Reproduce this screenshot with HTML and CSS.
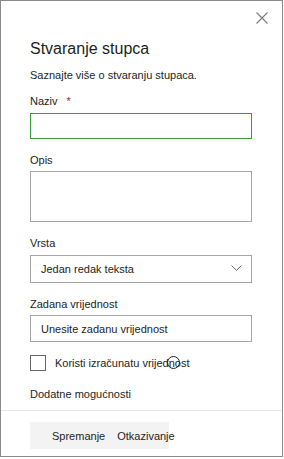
FILE: index.html
```html
<!DOCTYPE html>
<html lang="hr">
<head>
  <meta charset="UTF-8" />
  <meta name="viewport" content="width=device-width, initial-scale=1.0"/>
  <title>Stvaranje stupca</title>
  <link rel="stylesheet" href="styles.css">
</head>
<body>
  <div class="panel">
    <div class="panel-top">
      <button class="close-btn" title="Zatvori">
        <svg width="12" height="12" viewBox="0 0 12 12"><path d="M0.5 0.5L11.5 11.5M11.5 0.5L0.5 11.5" stroke="#7a7a7a" stroke-width="1.1" fill="none"/></svg>
      </button>
    </div>
    <div class="panel-body">
      <h2 class="title">Stvaranje stupca</h2>
      <div class="subtitle">Saznajte više o stvaranju stupaca.</div>

      <div class="group first">
        <label class="lbl">Naziv <span class="req">*</span></label>
        <div class="field field-active"></div>
      </div>

      <div class="group">
        <label class="lbl">Opis</label>
        <div class="field field-area"></div>
      </div>

      <div class="group">
        <label class="lbl">Vrsta</label>
        <div class="field field-select">
          <span>Jedan redak teksta</span>
          <svg width="11" height="6" viewBox="0 0 11 6"><path d="M0.5 0.5L5.5 5.3L10.5 0.5" stroke="#6b6b6b" stroke-width="1" fill="none"/></svg>
        </div>
      </div>

      <div class="group">
        <label class="lbl">Zadana vrijednost</label>
        <div class="field field-text">Unesite zadanu vrijednost</div>
      </div>

      <div class="check-row">
        <span class="check-box"></span>
        <span class="check-label">Koristi izračunatu vrijednost<span class="info-ring"></span></span>
      </div>

      <div class="more">Dodatne mogućnosti</div>
    </div>
    <div class="panel-foot">
      <div class="btn-bar">
        <span>Spremanje</span>
        <span>Otkazivanje</span>
      </div>
    </div>
  </div>
</body>
</html>
```

FILE: styles.css
```css
body {margin: 0; padding: 0; background: #fff; font-family: "Liberation Sans", Arial, sans-serif; color: #252423;}
.panel {box-sizing: border-box; width: 283px; height: 457px; border: 1px solid #8a8a8a; display: flex; flex-direction: column; background: #fff;}
.panel-top {display: flex; justify-content: flex-end; height: 30px; padding: 11px 14px 0 0; box-sizing: border-box;}
.close-btn {background: none; border: none; padding: 0; width: 12px; height: 12px; cursor: pointer; display: block;}
.close-btn svg {display: block;}
.panel-body {padding: 0 0 0 29px;}
.title {margin: 8px 0 0; font-size: 16px; line-height: 20px; font-weight: normal; color: #201f1e;}
.subtitle {margin-top: 8px; font-size: 11px; line-height: 16px; color: #201f1e;}
.group {margin-top: 13px;}
.group.first {margin-top: 10px;}
.lbl {display: block; font-size: 11px; line-height: 16px; margin-bottom: 3.5px; color: #252423;}
.req {color: #a4262c; margin-left: 6px;}
.field {box-sizing: border-box; width: 222px; border: 1px solid #a6a6a6; background: #fff; font-size: 11px; color: #252423;}
.field-active {height: 26px; border-color: #36a036;}
.field-area {height: 51px;}
.field-select {height: 28px; display: flex; align-items: center; justify-content: space-between; padding: 0 9px 0 10px;}
.field-select svg {display: block; margin-top: -1px;}
.field-text {height: 27px; display: flex; align-items: center; padding-left: 10px;}
.check-row {display: flex; align-items: center; margin-top: 13px; height: 16px;}
.check-box {box-sizing: border-box; width: 16px; height: 16px; border: 1px solid #666; margin-right: 9px;}
.check-label {position: relative; font-size: 11px; line-height: 16px;}
.info-ring {position: absolute; left: 112px; top: 1px; width: 11px; height: 11px; border: 1px solid #222; border-radius: 50%;}
.more {margin-top: 15px; font-size: 11px; line-height: 16px;}
.panel-foot {margin-top: auto; border-top: 1px solid #e6e6e6; padding: 11px 0 7px 29px;}
.btn-bar {display: flex; align-items: center; gap: 12px; width: 139px; height: 27px; box-sizing: border-box; padding-left: 22px; background: #f3f3f3; font-size: 11px; white-space: nowrap; color: #252423;}
```
